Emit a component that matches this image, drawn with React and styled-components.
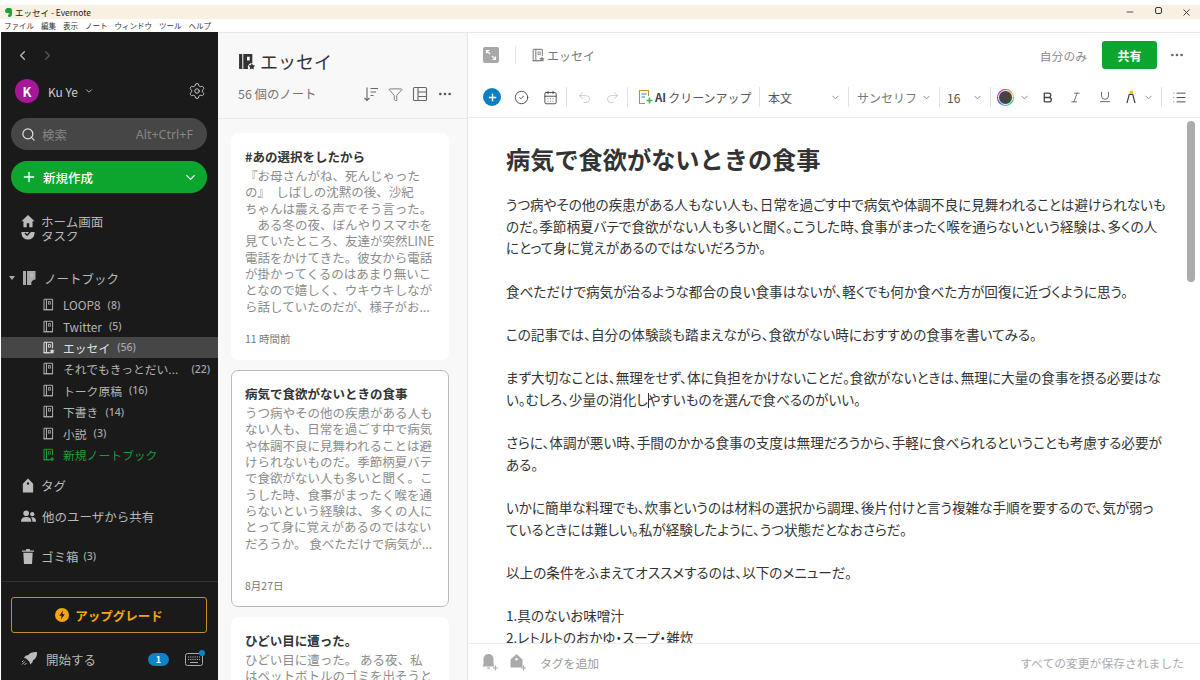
import React from "react";
import styled, { createGlobalStyle } from "styled-components";
import { ChevronLeft, ChevronRight, ChevronDown, Settings, Search, Plus, Undo2, Redo2, Bold, Italic, Underline, MoreHorizontal, CheckCircle2, CalendarDays, Filter, List, Minus, X } from "lucide-react";

const GlobalStyle = createGlobalStyle`
  html, body { margin: 0; padding: 0; background: #fff; }
  body { font-family: "Noto Sans CJK JP", "Noto Sans", sans-serif; overflow: hidden; }
  * { box-sizing: border-box; }
`;

const Window = styled.div`
  width: 1200px;
  height: 680px;
  display: flex;
  flex-direction: column;
  overflow: hidden;
`;

const TitleBar = styled.div`
  height: 14px;
  margin-top: 5px;
  background: #f7f0e3;
  display: flex;
  align-items: center;
  padding-left: 4px;
  font-size: 8.5px;
  color: #222;
  gap: 3px;
`;

const WindowButtons = styled.div`
  margin-left: auto;
  display: flex;
  color: #333;
`;

const WindowButton = styled.div`
  width: 28px;
  display: flex;
  justify-content: center;
`;

const RestoreIcon = styled.div`
  width: 7px;
  height: 7px;
  border: 1.3px solid #333;
  border-radius: 2px;
`;

const MenuBar = styled.div`
  height: 13px;
  display: flex;
  align-items: center;
  gap: 7px;
  padding-left: 4px;
  font-size: 7.5px;
  color: #333;
  background: #fff;
`;

const Main = styled.div`
  flex: 1;
  display: flex;
  min-height: 0;
`;

const Sidebar = styled.nav`
  width: 217px;
  flex: none;
  margin-left: 1px;
  background: #1a1a1a;
  color: #ccc;
  display: flex;
  flex-direction: column;
`;

const NavArrows = styled.div`
  height: 46px;
  display: flex;
  align-items: center;
  gap: 10px;
  padding-left: 14px;
  color: #bbb;
`;

const UserRow = styled.div`
  height: 26px;
  display: flex;
  align-items: center;
  padding: 0 12px 0 14px;
  font-size: 12px;
  color: #ccc;
`;

const Avatar = styled.div`
  width: 24px;
  height: 24px;
  border-radius: 50%;
  background: #a6179a;
  color: #fff;
  font-size: 13px;
  font-weight: 700;
  display: flex;
  align-items: center;
  justify-content: center;
  margin-right: 9px;
`;

const SearchBox = styled.div`
  height: 32px;
  margin: 14px 11px 0 10px;
  border-radius: 16px;
  background: #464646;
  display: flex;
  align-items: center;
  padding: 0 14px 0 10px;
  color: #858585;
  font-size: 12.5px;
  gap: 6px;
  svg { color: #ddd; }
  em { margin-left: auto; font-style: normal; font-size: 12.5px; font-family: "Noto Sans", sans-serif; }
`;

const NewButton = styled.div`
  height: 32px;
  margin: 11px 11px 0 10px;
  border-radius: 16px;
  background: #0ca62e;
  color: #fff;
  display: flex;
  align-items: center;
  padding: 0 9px 0 10px;
  font-size: 12.5px;
  font-weight: 500;
  gap: 6px;
  svg:last-child { margin-left: auto; }
`;

const NavList = styled.div`
  margin-top: 17px;
  display: flex;
  flex-direction: column;
`;

const NavRow = styled.div`
  height: 22px;
  margin-top: ${(p) => p.$top || 0}px;
  display: flex;
  align-items: center;
  gap: 6px;
  padding-left: ${(p) => p.$indent || 20}px;
  font-size: 12.5px;
  color: #b8b8b8;
  white-space: nowrap;
  svg { flex: none; }
`;

const ClippedRow = styled(NavRow)`
  height: 14px;
  overflow: hidden;
  align-items: flex-start;
  & > * { margin-top: -6px; }
`;

const Caret = styled.div`
  width: 0;
  height: 0;
  border-left: 3.5px solid transparent;
  border-right: 3.5px solid transparent;
  border-top: 4px solid #aaa;
  margin-right: 1px;
`;

const Count = styled.span`
  font-size: 10.5px;
  color: #a8a8a8;
  margin-left: ${(p) => (p.$push ? "auto" : "-1px")};
  padding-right: ${(p) => (p.$push ? "8px" : 0)};
  font-weight: 500;
  font-family: "Noto Sans", sans-serif;
`;

const NotebookRow = styled.div`
  height: 21.4px;
  display: flex;
  align-items: center;
  gap: 8px;
  padding-left: 41px;
  font-size: 11.8px;
  color: ${(p) => (p.$green ? "#1b9c39" : p.$active ? "#e2e2e2" : "#b4b4b4")};
  background: ${(p) => (p.$active ? "#464646" : "transparent")};
  white-space: nowrap;
  svg { flex: none; }
`;

const NotebookList = styled.div`
  margin-top: 5px;
  display: flex;
  flex-direction: column;
`;

const SidebarFoot = styled.div`
  margin-top: 14px;
  border-top: 1px solid #333;
  padding: 15px 11px 0 10px;
  display: flex;
  flex-direction: column;
`;

const UpgradeButton = styled.div`
  height: 36px;
  border: 1px solid #c08f2a;
  border-radius: 3px;
  display: flex;
  align-items: center;
  justify-content: center;
  gap: 6px;
  color: #f2a60f;
  font-size: 12.5px;
  font-weight: 700;
`;

const StartRow = styled.div`
  height: 24px;
  margin-top: 14px;
  display: flex;
  align-items: center;
  gap: 8px;
  padding-left: 10px;
  color: #b8b8b8;
  font-size: 12.5px;
`;

const Badge = styled.div`
  margin-left: auto;
  width: 21px;
  height: 13px;
  border-radius: 7px;
  background: #0c82c8;
  color: #fff;
  font-size: 9px;
  font-weight: 700;
  display: flex;
  align-items: center;
  justify-content: center;
  margin-right: 8px;
`;

const KeyboardWrap = styled.div`
  position: relative;
  display: flex;
  margin-right: 4px;
`;

const BlueDot = styled.div`
  position: absolute;
  top: -3px;
  right: -2px;
  width: 6px;
  height: 6px;
  border-radius: 50%;
  background: #0c82c8;
`;

const NotesColumn = styled.section`
  width: 250px;
  flex: none;
  background: #f8f8f8;
  border-top: 1px solid #e8e8e8;
  border-right: 1px solid #e6e6e6;
  display: flex;
  flex-direction: column;
  overflow: hidden;
`;

const NotesHeader = styled.header`
  height: 86px;
  flex: none;
  border-bottom: 1px solid #e8e8e8;
  padding: 16px 14px 0 20px;
`;

const NotesTitle = styled.h2`
  margin: 0;
  height: 24px;
  display: flex;
  align-items: center;
  gap: 5px;
  font-size: 18px;
  font-weight: 400;
  color: #333;
`;

const NotesMeta = styled.div`
  margin-top: 12px;
  display: flex;
  align-items: center;
  font-size: 12.4px;
  color: #737373;
  span { margin-right: auto; }
`;

const NotesIcons = styled.div`
  display: flex;
  align-items: center;
  gap: 9px;
  color: #555;
`;

const CardList = styled.div`
  display: flex;
  flex-direction: column;
  gap: 10px;
  padding: 14px 18px 0 13px;
`;

const Card = styled.article`
  height: ${(p) => p.$height}px;
  flex: none;
  background: #fff;
  border-radius: 7px;
  border: 1px solid ${(p) => (p.$active ? "#b9b9b9" : "#fff")};
  padding: 14px 13px 0;
  display: flex;
  flex-direction: column;
`;

const CardTitle = styled.h3`
  margin: 0;
  font-size: 12.5px;
  line-height: 18px;
  font-weight: 700;
  color: #333;
  white-space: nowrap;
`;

const CardBody = styled.p`
  margin: 2px 0 0;
  font-size: 12.5px;
  line-height: 16.35px;
  color: #8c8c8c;
  white-space: nowrap;
`;

const CardDate = styled.div`
  margin-top: auto;
  margin-bottom: 13px;
  font-size: 10.5px;
  color: #777;
`;

const Editor = styled.section`
  flex: 1;
  min-width: 0;
  display: flex;
  flex-direction: column;
  background: #fff;
  border-top: 1px solid #e8e8e8;
`;

const EditorTop = styled.div`
  height: 44px;
  flex: none;
  display: flex;
  align-items: center;
  padding: 0 15px;
  color: #737373;
  font-size: 12px;
`;

const ExpandBox = styled.div`
  width: 16px;
  height: 16px;
  border-radius: 2px;
  background: #a8a8a8;
  color: #fff;
  display: flex;
  align-items: center;
  justify-content: center;
`;

const TopDivider = styled.div`
  width: 1px;
  height: 18px;
  background: #e4e4e4;
  margin: 0 15px 0 16px;
`;

const NotebookCrumb = styled.div`
  display: flex;
  align-items: center;
  gap: 2px;
  color: #777;
  font-size: 12px;
`;

const Visibility = styled.div`
  margin-left: auto;
  font-size: 11.8px;
  color: #8a8a8a;
`;

const ShareButton = styled.div`
  width: 55px;
  height: 28px;
  margin: 0 12px 0 15px;
  border-radius: 3px;
  background: #0ca62e;
  color: #fff;
  font-size: 12px;
  font-weight: 700;
  display: flex;
  align-items: center;
  justify-content: center;
`;

const Toolbar = styled.div`
  height: 41px;
  flex: none;
  border-bottom: 1px solid #ececec;
  display: flex;
  align-items: center;
  padding-left: 10px;
  color: #666;
  font-size: 12px;
`;

const ToolSlot = styled.div`
  width: ${(p) => p.$w}px;
  flex: none;
  display: flex;
  align-items: center;
  justify-content: ${(p) => p.$justify || "center"};
  gap: ${(p) => p.$gap || 0}px;
  padding-left: ${(p) => p.$pad || 0}px;
  color: ${(p) => p.$color || "#555"};
  white-space: nowrap;
  b { font-weight: 700; font-size: 11.5px; color: #444; }
`;

const ToolSep = styled.div`
  width: 1px;
  height: 20px;
  flex: none;
  margin: 0 2px;
  background: #e2e2e2;
`;

const PlusCircle = styled.div`
  width: 18px;
  height: 18px;
  border-radius: 50%;
  background: #0a7fc4;
  color: #fff;
  display: flex;
  align-items: center;
  justify-content: center;
`;

const ColorRing = styled.div`
  width: 17px;
  height: 17px;
  border-radius: 50%;
  background: conic-gradient(#f33, #fc0, #3c3, #0cf, #33f, #f0f, #f33);
  display: flex;
  align-items: center;
  justify-content: center;
  &::after {
    content: "";
    width: 13px;
    height: 13px;
    border-radius: 50%;
    background: #444;
    border: 1.5px solid #fff;
  }
`;

const ArticleWrap = styled.div`
  flex: 1;
  min-height: 0;
  display: flex;
  overflow: hidden;
  padding-right: 5px;
`;

const Article = styled.article`
  flex: 1;
  padding: 23px 0 0 38px;
  color: #333;
`;

const ArticleTitle = styled.h1`
  margin: 0 0 17px;
  font-size: 24.2px;
  line-height: 36px;
  font-weight: 700;
  color: #333;
`;

const Paragraph = styled.p`
  margin: 0 0 21.65px;
  font-size: 13.6px;
  line-height: 21.65px;
  font-feature-settings: "palt";
  white-space: nowrap;
`;

const TextCursor = styled.span`
  display: inline-block;
  width: 1px;
  height: 15px;
  margin-right: -1px;
  vertical-align: -3px;
  background: #333;
`;

const ScrollTrack = styled.div`
  width: 8px;
  flex: none;
  padding-top: 3px;
`;

const ScrollThumb = styled.div`
  height: 161px;
  border-radius: 4px;
  background: #ababab;
`;

const EditorFoot = styled.footer`
  height: 37px;
  flex: none;
  border-top: 1px solid #eee;
  display: flex;
  align-items: center;
  padding: 0 16px 0 13px;
  color: #aaa;
  font-size: 12px;
  gap: 10px;
  span:last-child { margin-left: auto; color: #aaa; font-size: 11.8px; }
`;

const TagHint = styled.span`
  margin-left: 3px;
  font-size: 11.8px;
  color: #999;
`;

// small hand drawn icons lucide has no match for
const NotebookIcon = ({ size = 13, color = "#aaa", mark }) => (
  <svg width={size} height={size} viewBox="0 0 16 16" fill="none" stroke={color} strokeWidth="1.3">
    <path d="M2.5 1.5h9.5a1 1 0 0 1 1 1V9M13 14.5H2.5z" strokeLinejoin="round" />
    <path d="M2.5 1.5v13H9" />
    <path d="M5.5 1.5v13" />
    <rect x="8" y="4.5" width="2.5" height="3" strokeWidth="1" />
    {mark === "star" && <path d="M12.5 9.5l1 2 2.2.3-1.6 1.5.4 2.2-2-1-2 1 .4-2.2-1.6-1.5 2.2-.3z" fill={color} stroke="none" />}
    {mark === "plus" && <path d="M12.5 11v5M10 13.5h5" />}
    {!mark && <path d="M13 9v5.5H9" />}
  </svg>
);

const NotebookSolid = ({ size = 16, color = "#aaa", star }) => (
  <svg width={size} height={size} viewBox="0 0 16 16" fill={color}>
    <rect x="1" y="1" width="3" height="14" />
    <path d="M5 1h8.5v8.5a4 4 0 0 0-4 5.5H5z" />
    <rect x="8.5" y="3.5" width="2.5" height="3.5" fill="#fff" opacity={star ? 1 : 0.2} />
    {star && <path d="M13 9.5l1 2 2.2.3-1.6 1.5.4 2.2-2-1-2 1 .4-2.2-1.6-1.5 2.2-.3z" />}
  </svg>
);

const HomeIcon = () => (
  <svg width="14" height="14" viewBox="0 0 16 16" fill="#bbb">
    <path d="M8 1L0.5 8.2h2.3V15h3.7v-4.5h3V15h3.7V8.2h2.3z" />
  </svg>
);

const TaskIcon = () => (
  <svg width="14" height="14" viewBox="0 0 16 16">
    <circle cx="8" cy="8" r="7.5" fill="#bbb" />
    <path d="M4.5 8l2.5 2.5 4.5-5" fill="none" stroke="#1a1a1a" strokeWidth="1.6" />
  </svg>
);

const TagIcon = () => (
  <svg width="14" height="15" viewBox="0 0 14 16" fill="#bbb">
    <path fillRule="evenodd" d="M7 .5L12.5 6v9.5h-11V6zM7 4.5a1.3 1.3 0 1 0 0 2.6 1.3 1.3 0 0 0 0-2.6z" />
  </svg>
);

const PeopleIcon = () => (
  <svg width="15" height="14" viewBox="0 0 16 14" fill="#bbb">
    <circle cx="5.5" cy="4" r="3" />
    <path d="M0 13c0-3.5 2-5 5.5-5S11 9.5 11 13z" />
    <circle cx="12" cy="5" r="2.3" />
    <path d="M12 8.2c2.4 0 4 1.2 4 4.8h-3.8c0-2-.5-3.4-1.7-4.7z" />
  </svg>
);

const TrashIcon = () => (
  <svg width="14" height="15" viewBox="0 0 14 16" fill="#bbb">
    <path d="M5 0h4v1.5h4.5V3H.5V1.5H5zM2 4h10l-.7 12H2.7z" />
  </svg>
);

const BoltIcon = () => (
  <svg width="14" height="14" viewBox="0 0 14 14">
    <circle cx="7" cy="7" r="7" fill="#f2a60f" />
    <path d="M8 2.5L4.3 7.8h2.3L6 11.5l3.7-5.3H7.4z" fill="#1a1a1a" />
  </svg>
);

const RocketIcon = () => (
  <svg width="17" height="16" viewBox="0 0 17 16" fill="#bbb">
    <path d="M16 1c-4-.3-7 .8-9 3.2L5 4.6 2.8 7l2.4.6 3.4 3.4.6 2.4 2.3-2.2.5-2C14.9 7.900 16.300 5 16 1z" />
    <path d="M4 10.500l-3 3M5.500 12l-2 2M2.500 9.500l-1.500 1.500" stroke="#bbb" strokeWidth="1" />
  </svg>
);

const KeyboardIcon = () => (
  <svg width="18" height="13" viewBox="0 0 18 13" fill="none" stroke="#aaa">
    <rect x=".5" y=".5" width="17" height="12" rx="2" />
    <path d="M3 4h12M3 6.500h12" strokeDasharray="1.200 1" />
    <path d="M5 9.500h8" />
  </svg>
);

const ExpandIcon = () => (
  <svg width="12" height="12" viewBox="0 0 12 12" fill="none" stroke="#fff" strokeWidth="1.200">
    <path d="M1.500 4.500v-3h3M1.500 1.500l3.500 3.500M10.500 7.500v3h-3M10.500 10.500L7 7" />
  </svg>
);

const SortIcon = () => (
  <svg width="16" height="16" viewBox="0 0 16 16" fill="none" stroke="#666" strokeWidth="1.100">
    <path d="M4 1.500v13M1.500 12L4 14.500 6.500 12M7.500 2.500h7.500M7.500 6h5.500M7.500 9.500h3" />
  </svg>
);

const GridIcon = () => (
  <svg width="16" height="16" viewBox="0 0 16 16" fill="none" stroke="#666" strokeWidth="1.100">
    <rect x="1.500" y="1.500" width="13" height="13" rx="1" />
    <path d="M6 1.500v13M6 6h8.500M6 10.500h8.500" />
  </svg>
);

const AiIcon = () => (
  <svg width="16" height="16" viewBox="0 0 16 16" fill="none" stroke="#1c9a78" strokeWidth="1.100">
    <path d="M8 14.500H2.500v-13h9V7" stroke="#d08a2e" />
    <path d="M4.500 5h5M4.500 8h3.500" stroke="#1c9a78" />
    <path d="M12.500 8.500v6M9.500 11.500h6" stroke="#3cb94c" strokeWidth="1.600" />
  </svg>
);

const HighlightIcon = () => (
  <svg width="14" height="14" viewBox="0 0 14 14" fill="none">
    <path d="M5 4.500L6 1l3-.5v4z" fill="#f2c318" />
    <path d="M3 13l2.200-8.500h3.600L11 13" stroke="#444" strokeWidth="1.200" />
  </svg>
);

const BellPlus = () => (
  <svg width="18" height="18" viewBox="0 0 18 18" fill="#aaa">
    <path d="M7.500 1a5 5 0 0 1 5 5v5l1 2.500H1.500l1-2.500V6a5 5 0 0 1 5-5z" />
    <path d="M6 14.500h3a1.500 1.500 0 0 1-3 0z" />
    <path d="M14.500 12.500v5M12 15h5" stroke="#aaa" fill="none" />
  </svg>
);

const TagPlus = () => (
  <svg width="18" height="18" viewBox="0 0 18 18" fill="#aaa">
    <path fillRule="evenodd" d="M7.500 1l6 5.500v8h-12v-8zM7.500 5a1.300 1.300 0 1 0 0 2.600A1.300 1.300 0 0 0 7.500 5z" />
    <path d="M14.500 12.500v5M12 15h5" stroke="#aaa" fill="none" />
  </svg>
);

const EvernoteMark = () => (
  <svg width="8" height="9" viewBox="0 0 8 9" fill="#17a53a">
    <path d="M1 2l2-2h3c1.500 0 2 1 2 3v3c0 2-1 3-2.500 3-1 0-1.500-.5-1.500-1.500S5 6 6 6.500C5.500 5 4 5 3 5 1.500 5 1 4 1 2z" />
  </svg>
);

const menuItems = ["ファイル", "編集", "表示", "ノート", "ウィンドウ", "ツール", "ヘルプ"];

const notebooks = [
  { name: "LOOP8", count: 8 },
  { name: "Twitter", count: 5 },
  { name: "エッセイ", count: 56, active: true },
  { name: "それでもきっとだい...", count: 22, push: true },
  { name: "トーク原稿", count: 16 },
  { name: "下書き", count: 14 },
  { name: "小説", count: 3 },
];

const notes = [
  {
    height: 227,
    title: "#あの選択をしたから",
    lines: ["『お母さんがね、死んじゃった", "の』　しばしの沈黙の後、沙紀", "ちゃんは震える声でそう言った。", "　ある冬の夜、ぼんやりスマホを", "見ていたところ、友達が突然LINE", "電話をかけてきた。彼女から電話", "が掛かってくるのはあまり無いこ", "となので嬉しく、ウキウキしなが", "ら話していたのだが、様子がお..."],
    date: "11 時間前",
  },
  {
    height: 237,
    active: true,
    title: "病気で食欲がないときの食事",
    lines: ["うつ病やその他の疾患がある人も", "ない人も、日常を過ごす中で病気", "や体調不良に見舞われることは避", "けられないものだ。季節柄夏バテ", "で食欲がない人も多いと聞く。こ", "うした時、食事がまったく喉を通", "らないという経験は、多くの人に", "とって身に覚えがあるのではない", "だろうか。 食べただけで病気が..."],
    date: "8月27日",
  },
  {
    height: 120,
    title: "ひどい目に遭った。",
    lines: ["ひどい目に遭った。 ある夜、私", "はペットボトルのゴミを出そうと"],
  },
];

const paragraphs = [
  ["うつ病やその他の疾患がある人もない人も、日常を過ごす中で病気や体調不良に見舞われることは避けられないも", "のだ。季節柄夏バテで食欲がない人も多いと聞く。こうした時、食事がまったく喉を通らないという経験は、多くの人", "にとって身に覚えがあるのではないだろうか。"],
  ["食べただけで病気が治るような都合の良い食事はないが、軽くでも何か食べた方が回復に近づくように思う。"],
  ["この記事では、自分の体験談も踏まえながら、食欲がない時におすすめの食事を書いてみる。"],
  ["まず大切なことは、無理をせず、体に負担をかけないことだ。食欲がないときは、無理に大量の食事を摂る必要はな", <React.Fragment key="c">い。むしろ、少量の消化し<TextCursor />やすいものを選んで食べるのがいい。</React.Fragment>],
  ["さらに、体調が悪い時、手間のかかる食事の支度は無理だろうから、手軽に食べられるということも考慮する必要が", "ある。"],
  ["いかに簡単な料理でも、炊事というのは材料の選択から調理、後片付けと言う複雑な手順を要するので、気が弱っ", "ているときには難しい。私が経験したように、うつ状態だとなおさらだ。"],
  ["以上の条件をふまえてオススメするのは、以下のメニューだ。"],
  ["1.具のないお味噌汁", "2.レトルトのおかゆ・スープ・雑炊"],
];

const Lines = ({ lines }) =>
  lines.map((line, i) => (
    <React.Fragment key={i}>
      {line}
      {i < lines.length - 1 && <br />}
    </React.Fragment>
  ));

const Chevron = () => <ChevronDown size={11} strokeWidth={1.6} color="#666" />;

export default function App() {
  return (
    <Window>
      <GlobalStyle />
      <TitleBar>
        <EvernoteMark />
        エッセイ - Evernote
        <WindowButtons>
          <WindowButton><Minus size={10} /></WindowButton>
          <WindowButton><RestoreIcon /></WindowButton>
          <WindowButton><X size={11} /></WindowButton>
        </WindowButtons>
      </TitleBar>
      <MenuBar>
        {menuItems.map((m) => <span key={m}>{m}</span>)}
      </MenuBar>
      <Main>
        <Sidebar>
          <NavArrows>
            <ChevronLeft size={15} />
            <ChevronRight size={15} color="#555" />
          </NavArrows>
          <UserRow>
            <Avatar>K</Avatar>
            Ku Ye
            <ChevronDown size={10} style={{ marginLeft: 6 }} />
            <Settings size={18} strokeWidth={1.3} style={{ marginLeft: "auto" }} />
          </UserRow>
          <SearchBox>
            <Search size={15} />
            検索
            <em>Alt+Ctrl+F</em>
          </SearchBox>
          <NewButton>
            <Plus size={16} />
            新規作成
            <ChevronDown size={15} />
          </NewButton>
          <NavList>
            <NavRow><HomeIcon />ホーム画面</NavRow>
            <ClippedRow><TaskIcon /><span>タスク</span></ClippedRow>
            <NavRow $top={21} $indent={8}><Caret /><NotebookSolid />ノートブック</NavRow>
            <NotebookList>
              {notebooks.map((n) => (
                <NotebookRow key={n.name} $active={n.active}>
                  <NotebookIcon color={n.active ? "#ddd" : "#aaa"} mark={n.active ? "star" : undefined} />
                  {n.name}
                  <Count $push={n.push}>({n.count})</Count>
                </NotebookRow>
              ))}
              <NotebookRow $green>
                <NotebookIcon color="#1b9c39" mark="plus" />
                新規ノートブック
              </NotebookRow>
            </NotebookList>
            <NavRow $top={9}><TagIcon />タグ</NavRow>
            <NavRow $top={9}><PeopleIcon />他のユーザから共有</NavRow>
            <NavRow $top={18}><TrashIcon />ゴミ箱<Count>(3)</Count></NavRow>
          </NavList>
          <SidebarFoot>
            <UpgradeButton><BoltIcon />アップグレード</UpgradeButton>
            <StartRow>
              <RocketIcon />
              開始する
              <Badge>1</Badge>
              <KeyboardWrap><KeyboardIcon /><BlueDot /></KeyboardWrap>
            </StartRow>
          </SidebarFoot>
        </Sidebar>
        <NotesColumn>
          <NotesHeader>
            <NotesTitle><NotebookSolid size={17} color="#333" star />エッセイ</NotesTitle>
            <NotesMeta>
              <span>56 個のノート</span>
              <NotesIcons>
                <SortIcon />
                <Filter size={15} strokeWidth={1.2} />
                <GridIcon />
                <MoreHorizontal size={16} />
              </NotesIcons>
            </NotesMeta>
          </NotesHeader>
          <CardList>
            {notes.map((n) => (
              <Card key={n.title} $height={n.height} $active={n.active}>
                <CardTitle>{n.title}</CardTitle>
                <CardBody><Lines lines={n.lines} /></CardBody>
                {n.date && <CardDate>{n.date}</CardDate>}
              </Card>
            ))}
          </CardList>
        </NotesColumn>
        <Editor>
          <EditorTop>
            <ExpandBox><ExpandIcon /></ExpandBox>
            <TopDivider />
            <NotebookCrumb><NotebookIcon size={14} color="#888" mark="star" />エッセイ</NotebookCrumb>
            <Visibility>自分のみ</Visibility>
            <ShareButton>共有</ShareButton>
            <MoreHorizontal size={16} color="#666" />
          </EditorTop>
          <Toolbar>
            <ToolSlot $w={28}><PlusCircle><Plus size={11} strokeWidth={3} /></PlusCircle></ToolSlot>
            <ToolSlot $w={30}><CheckCircle2 size={15} strokeWidth={1.3} color="#333" /></ToolSlot>
            <ToolSlot $w={28}><CalendarDays size={15} strokeWidth={1.3} color="#333" /></ToolSlot>
            <ToolSep />
            <ToolSlot $w={30} $color="#bbb"><Undo2 size={15} strokeWidth={1.2} /></ToolSlot>
            <ToolSlot $w={26} $color="#bbb"><Redo2 size={15} strokeWidth={1.2} /></ToolSlot>
            <ToolSep />
            <ToolSlot $w={127} $justify="flex-start" $pad={7} $gap={2}><AiIcon /><b>AI</b> クリーンアップ</ToolSlot>
            <ToolSep />
            <ToolSlot $w={84} $justify="flex-start" $pad={6}>本文<ChevronDown size={11} strokeWidth={1.6} color="#666" style={{ marginLeft: "auto", marginRight: 5 }} /></ToolSlot>
            <ToolSep />
            <ToolSlot $w={86} $justify="flex-start" $pad={6} $color="#777">サンセリフ<ChevronDown size={11} strokeWidth={1.6} color="#666" style={{ marginLeft: "auto", marginRight: 5 }} /></ToolSlot>
            <ToolSep />
            <ToolSlot $w={46} $justify="flex-start" $pad={5} >16<ChevronDown size={11} strokeWidth={1.6} color="#666" style={{ marginLeft: "auto", marginRight: 5 }} /></ToolSlot>
            <ToolSep />
            <ToolSlot $w={40} $gap={5}><ColorRing /><Chevron /></ToolSlot>
            <ToolSlot $w={28}><Bold size={13} strokeWidth={2.4} color="#444" /></ToolSlot>
            <ToolSlot $w={29}><Italic size={13} strokeWidth={1.5} /></ToolSlot>
            <ToolSlot $w={29}><Underline size={14} strokeWidth={1.5} /></ToolSlot>
            <ToolSlot $w={40} $gap={5}><HighlightIcon /><Chevron /></ToolSlot>
            <ToolSep />
            <ToolSlot $w={30}><List size={15} strokeWidth={1.5} color="#444" /></ToolSlot>
          </Toolbar>
          <ArticleWrap>
            <Article>
              <ArticleTitle>病気で食欲がないときの食事</ArticleTitle>
              {paragraphs.map((lines, i) => (
                <Paragraph key={i}><Lines lines={lines} /></Paragraph>
              ))}
            </Article>
            <ScrollTrack><ScrollThumb /></ScrollTrack>
          </ArticleWrap>
          <EditorFoot>
            <BellPlus />
            <TagPlus />
            <TagHint>タグを追加</TagHint>
            <span>すべての変更が保存されました</span>
          </EditorFoot>
        </Editor>
      </Main>
    </Window>
  );
}
